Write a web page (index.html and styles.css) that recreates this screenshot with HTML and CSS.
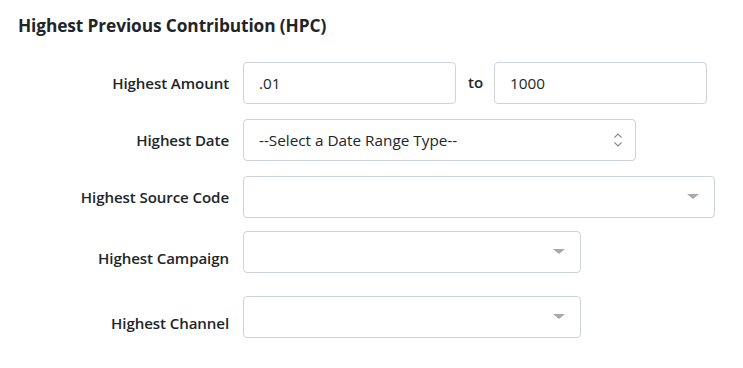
FILE: index.html
```html
<!DOCTYPE html>
<html>
<head>
<meta charset="utf-8">
<link rel="stylesheet" href="styles.css">
</head>
<body>
<div class="panel">
  <h2 class="title">Highest Previous Contribution (HPC)</h2>
  <div class="row first">
    <label class="label">Highest Amount</label>
    <div class="control">
      <div class="input w212">.01</div>
      <span class="to">to</span>
      <div class="input w212">1000</div>
    </div>
  </div>
  <div class="row">
    <label class="label">Highest Date</label>
    <div class="control">
      <div class="input select w393">
        <span>--Select a Date Range Type--</span>
        <svg class="updown" width="10" height="16" viewBox="0 0 10 16">
          <path d="M1.5 5.5 L5 2 L8.5 5.5" fill="none" stroke="#8a8a8a" stroke-width="1.1"/>
          <path d="M1.5 10.5 L5 14 L8.5 10.5" fill="none" stroke="#8a8a8a" stroke-width="1.1"/>
        </svg>
      </div>
    </div>
  </div>
  <div class="row">
    <label class="label">Highest Source Code</label>
    <div class="control">
      <div class="input select2 w472"><span class="caret"></span></div>
    </div>
  </div>
  <div class="row tight">
    <label class="label low">Highest Campaign</label>
    <div class="control">
      <div class="input select2 w338"><span class="caret"></span></div>
    </div>
  </div>
  <div class="row last">
    <label class="label low">Highest Channel</label>
    <div class="control">
      <div class="input select2 w338"><span class="caret"></span></div>
    </div>
  </div>
</div>
</body>
</html>
```

FILE: styles.css
```css
html, body {
  margin: 0;
  padding: 0;
  background: #ffffff;
}
body {
  font-family: "Open Sans", "Noto Sans", "Liberation Sans", sans-serif;
  color: #212529;
}
.panel {
  padding: 14px 0 0 18px;
  width: 725px;
}
.title {
  margin: 0;
  font-size: 17.3px;
  font-weight: 700;
  line-height: 24px;
  letter-spacing: -0.1px;
}
.row {
  display: flex;
  align-items: center;
  margin-top: 15px;
}
.row.first {
  margin-top: 24px;
}
.row.tight {
  margin-top: 13px;
}
.row.last {
  margin-top: 23px;
}
.label {
  flex: none;
  width: 225px;
  box-sizing: border-box;
  padding-right: 14px;
  text-align: right;
  font-size: 15.1px;
  font-weight: 600;
  letter-spacing: -0.1px;
  line-height: 20px;
}
.label.low {
  padding-top: 11px;
}
.control {
  display: flex;
  align-items: center;
}
.input {
  height: 42px;
  box-sizing: border-box;
  border: 1px solid #ced4da;
  border-radius: 4px;
  padding: 0 15px;
  display: flex;
  align-items: center;
  font-size: 15.3px;
  color: #212529;
  background: #fff;
}
.w212 { width: 213px; }
.w393 { width: 393px; }
.w472 { width: 472px; }
.w338 { width: 338px; }
.to {
  font-size: 15px;
  font-weight: 600;
  margin: 0 11px 0 12px;
  padding-bottom: 2px;
}
.select {
  justify-content: space-between;
  padding-right: 12px;
}
.updown {
  display: block;
}
.select2 {
  justify-content: flex-end;
  padding-right: 15px;
}
.caret {
  width: 0;
  height: 0;
  border-left: 6px solid transparent;
  border-right: 6px solid transparent;
  border-top: 5px solid #a9a9a9;
  margin-bottom: 1px;
}
```
